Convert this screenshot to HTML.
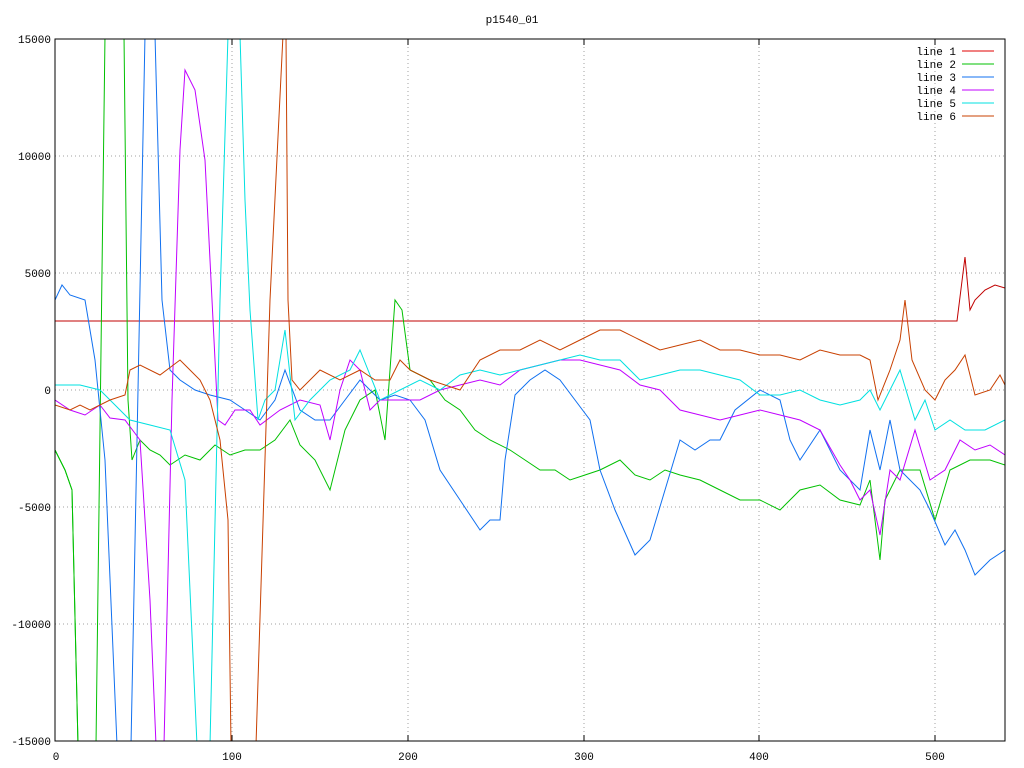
<!DOCTYPE html>
<html><head><meta charset="utf-8"><style>
html,body{margin:0;padding:0;background:#fff;}
svg{display:block;}
text{font-family:"Liberation Mono","DejaVu Sans Mono",monospace;font-size:11px;fill:#000;}
</style></head><body>
<svg width="1024" height="768" viewBox="0 0 1024 768" xmlns="http://www.w3.org/2000/svg">
<rect width="1024" height="768" fill="#fff"/>
<defs><clipPath id="c"><rect x="55" y="39" width="950" height="702"/></clipPath></defs>
<g stroke="#a0a0a0" stroke-width="1" stroke-dasharray="1,3">
<line x1="232" y1="39" x2="232" y2="741"/><line x1="408" y1="39" x2="408" y2="741"/>
<line x1="584" y1="39" x2="584" y2="741"/><line x1="759" y1="39" x2="759" y2="741"/>
<line x1="935" y1="39" x2="935" y2="741"/>
<line x1="55" y1="156" x2="1005" y2="156"/><line x1="55" y1="273" x2="1005" y2="273"/>
<line x1="55" y1="390" x2="1005" y2="390"/><line x1="55" y1="507" x2="1005" y2="507"/>
<line x1="55" y1="624" x2="1005" y2="624"/>
</g>
<g fill="none" stroke-width="1" clip-path="url(#c)">
<polyline stroke="#c00000" points="55,321 957,321 965,257 970,310 975,300 985,290 995,285 1005,288"/>
<polyline stroke="#00c000" points="55,450 65,470 72,490 78,745 M96,745"/>
<path stroke="#00c000" d="M55,450 L65,470 L72,490 L78,745 M96,745 L105,35 M124,35 L128,400 L132,460 L140,440 L150,450 L160,455 L170,465 L185,455 L200,460 L215,445 L230,455 L245,450 L260,450 L275,440 L290,420 L300,445 L315,460 L330,490 L345,430 L360,400 L375,390 L385,440 L395,300 L402,310 L410,370 L430,380 L445,400 L460,410 L475,430 L490,440 L510,450 L525,460 L540,470 L555,470 L570,480 L585,475 L600,470 L620,460 L635,475 L650,480 L665,470 L680,475 L700,480 L720,490 L740,500 L760,500 L780,510 L800,490 L820,485 L840,500 L860,505 L870,480 L880,560 L885,500 L900,470 L920,470 L935,520 L950,470 L970,460 L990,460 L1005,465"/>
<path stroke="#1070f0" d="M55,300 L62,285 L70,295 L85,300 L95,360 L105,460 L117,745 M131,745 L145,35 M155,35 L162,300 L170,370 L180,380 L195,390 L210,395 L230,400 L245,410 L260,420 L275,400 L285,370 L300,410 L315,420 L330,420 L345,400 L360,380 L380,400 L395,395 L410,400 L425,420 L440,470 L460,500 L480,530 L490,520 L500,520 L505,460 L515,395 L530,380 L545,370 L560,380 L575,400 L590,420 L600,470 L615,510 L635,555 L650,540 L665,490 L680,440 L695,450 L710,440 L720,440 L735,410 L760,390 L780,400 L790,440 L800,460 L820,430 L840,470 L860,490 L870,430 L880,470 L890,420 L900,470 L920,490 L930,510 L945,545 L955,530 L965,550 L975,575 L990,560 L1005,550"/>
<path stroke="#c000ff" d="M55,400 L70,410 L85,415 L100,405 L110,418 L125,420 L140,440 L150,600 L156,745 M164,745 L172,400 L180,150 L185,70 L195,90 L205,160 L212,300 L218,420 L225,425 L235,410 L250,410 L260,425 L280,410 L300,400 L320,405 L330,440 L340,390 L350,360 L360,370 L370,410 L380,400 L400,400 L420,400 L440,390 L460,385 L480,380 L500,385 L520,370 L540,365 L560,360 L580,360 L600,365 L620,370 L640,385 L660,390 L680,410 L700,415 L720,420 L740,415 L760,410 L780,415 L800,420 L820,430 L840,465 L850,480 L860,500 L870,490 L880,535 L890,470 L900,480 L915,430 L930,480 L945,470 L960,440 L975,450 L990,445 L1005,455"/>
<path stroke="#00e0e0" d="M55,385 L80,385 L100,390 L115,405 L130,420 L150,425 L170,430 L185,480 L197,745 M210,745 L220,300 L228,35 M240,35 L245,200 L250,310 L258,420 L265,400 L275,390 L285,330 L295,420 L310,400 L330,380 L350,370 L360,350 L370,375 L380,400 L400,390 L420,380 L440,390 L460,375 L480,370 L500,375 L520,370 L560,360 L580,355 L600,360 L620,360 L640,380 L660,375 L680,370 L700,370 L720,375 L740,380 L760,395 L780,395 L800,390 L820,400 L840,405 L860,400 L870,390 L880,410 L900,370 L915,420 L925,400 L935,430 L950,420 L965,430 L985,430 L1005,420"/>
<path stroke="#c84000" d="M55,405 L70,410 L80,405 L90,410 L110,400 L125,395 L130,370 L140,365 L160,375 L180,360 L190,370 L200,380 L210,400 L220,440 L228,520 L231,745 M256,745 L270,300 L283,35 M286,35 L288,300 L292,380 L300,390 L320,370 L340,380 L360,370 L375,380 L390,380 L400,360 L410,370 L430,380 L460,390 L480,360 L500,350 L520,350 L540,340 L560,350 L580,340 L600,330 L620,330 L640,340 L660,350 L680,345 L700,340 L720,350 L740,350 L760,355 L780,355 L800,360 L820,350 L840,355 L860,355 L870,360 L878,400 L890,370 L900,340 L905,300 L912,360 L925,390 L935,400 L945,380 L955,370 L965,355 L975,395 L990,390 L1000,375 L1005,385"/>
</g>
<rect x="55" y="39" width="950" height="702" fill="none" stroke="#000" stroke-width="1"/>
<g stroke="#000">
<line x1="232" y1="39" x2="232" y2="45"/><line x1="408" y1="39" x2="408" y2="45"/><line x1="584" y1="39" x2="584" y2="45"/><line x1="759" y1="39" x2="759" y2="45"/><line x1="935" y1="39" x2="935" y2="45"/>
<line x1="232" y1="741" x2="232" y2="735"/><line x1="408" y1="741" x2="408" y2="735"/><line x1="584" y1="741" x2="584" y2="735"/><line x1="759" y1="741" x2="759" y2="735"/><line x1="935" y1="741" x2="935" y2="735"/>
</g>
<text x="512" y="23" text-anchor="middle">p1540_01</text>
<g text-anchor="end">
<text x="51" y="43">15000</text><text x="51" y="160">10000</text><text x="51" y="277">5000</text>
<text x="51" y="394">0</text><text x="51" y="511">-5000</text><text x="51" y="628">-10000</text><text x="51" y="745">-15000</text>
</g>
<g text-anchor="middle">
<text x="56" y="760">0</text><text x="232" y="760">100</text><text x="408" y="760">200</text>
<text x="584" y="760">300</text><text x="759" y="760">400</text><text x="935" y="760">500</text>
</g>
<g text-anchor="end">
<text x="956" y="55">line 1</text><text x="956" y="68">line 2</text><text x="956" y="81">line 3</text>
<text x="956" y="94">line 4</text><text x="956" y="107">line 5</text><text x="956" y="120">line 6</text>
</g>
<g stroke-width="1">
<line x1="962" y1="51" x2="994" y2="51" stroke="#e00000"/>
<line x1="962" y1="64" x2="994" y2="64" stroke="#00c000"/>
<line x1="962" y1="77" x2="994" y2="77" stroke="#1070f0"/>
<line x1="962" y1="90" x2="994" y2="90" stroke="#c000ff"/>
<line x1="962" y1="103" x2="994" y2="103" stroke="#00e0e0"/>
<line x1="962" y1="116" x2="994" y2="116" stroke="#c84000"/>
</g>
</svg>
</body></html>
